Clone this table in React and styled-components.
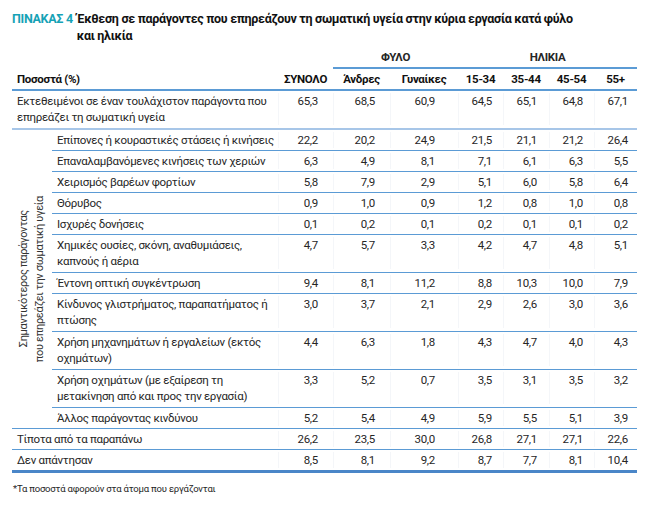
import React from "react";
import styled, { createGlobalStyle } from "styled-components";

const GlobalStyle = createGlobalStyle`
  body {
    margin: 0;
    background: #fff;
    font-family: Roboto, "Noto Sans", sans-serif;
    color: #262626;
  }
`;

// column layout: label | ΣΥΝΟΛΟ | Άνδρες | Γυναίκες | 15-34 | 35-44 | 45-54 | 55+
const NUM_COLS = "55px 57px 68px 45px 46px 45px 43px";
const PADS = [15, 15, 23, 11, 12, 11, 9];

const TOTAL = ["ΣΥΝΟΛΟ"];
const SEX = ["Άνδρες", "Γυναίκες"];
const AGE = ["15-34", "35-44", "45-54", "55+"];

const TOP = {
  label: "Εκτεθειμένοι σε έναν τουλάχιστον παράγοντα που\nεπηρεάζει τη σωματική υγεία",
  vals: ["65,3", "68,5", "60,9", "64,5", "65,1", "64,8", "67,1"]
};

const FACTORS = [
  { label: "Επίπονες ή κουραστικές στάσεις ή κινήσεις", vals: ["22,2", "20,2", "24,9", "21,5", "21,1", "21,2", "26,4"] },
  { label: "Επαναλαμβανόμενες κινήσεις των χεριών", vals: ["6,3", "4,9", "8,1", "7,1", "6,1", "6,3", "5,5"] },
  { label: "Χειρισμός βαρέων φορτίων", vals: ["5,8", "7,9", "2,9", "5,1", "6,0", "5,8", "6,4"] },
  { label: "Θόρυβος", vals: ["0,9", "1,0", "0,9", "1,2", "0,8", "1,0", "0,8"] },
  { label: "Ισχυρές δονήσεις", vals: ["0,1", "0,2", "0,1", "0,2", "0,1", "0,1", "0,2"] },
  { label: "Χημικές ουσίες, σκόνη, αναθυμιάσεις,\nκαπνούς ή αέρια", vals: ["4,7", "5,7", "3,3", "4,2", "4,7", "4,8", "5,1"] },
  { label: "Έντονη οπτική συγκέντρωση", vals: ["9,4", "8,1", "11,2", "8,8", "10,3", "10,0", "7,9"] },
  { label: "Κίνδυνος γλιστρήματος, παραπατήματος ή\nπτώσης", vals: ["3,0", "3,7", "2,1", "2,9", "2,6", "3,0", "3,6"] },
  { label: "Χρήση μηχανημάτων ή εργαλείων (εκτός\nοχημάτων)", vals: ["4,4", "6,3", "1,8", "4,3", "4,7", "4,0", "4,3"] },
  { label: "Χρήση οχημάτων (με εξαίρεση τη\nμετακίνηση από και προς την εργασία)", vals: ["3,3", "5,2", "0,7", "3,5", "3,1", "3,5", "3,2"] },
  { label: "Άλλος παράγοντας κινδύνου", vals: ["5,2", "5,4", "4,9", "5,9", "5,5", "5,1", "3,9"] }
];

const BOTTOM = [
  { label: "Τίποτα από τα παραπάνω", vals: ["26,2", "23,5", "30,0", "26,8", "27,1", "27,1", "22,6"] },
  { label: "Δεν απάντησαν", vals: ["8,5", "8,1", "9,2", "8,7", "7,7", "8,1", "10,4"] }
];

function App() {
  return (
    <Page>
      <GlobalStyle />
      <Title>
        <TitleTag>ΠΙΝΑΚΑΣ 4</TitleTag>
        <TitleText>
          Έκθεση σε παράγοντες που επηρεάζουν τη σωματική υγεία στην κύρια εργασία κατά φύλο
          <br />
          και ηλικία
        </TitleText>
      </Title>

      <Table>
        <GroupHead>
          <span />
          <span />
          <GroupName>ΦΥΛΟ</GroupName>
          <GroupName>ΗΛΙΚΙΑ</GroupName>
        </GroupHead>
        <HeadRow>
          <HeadLabel>Ποσοστά (%)</HeadLabel>
          {[...TOTAL, ...SEX, ...AGE].map(h => (
            <HeadCell key={h}>{h}</HeadCell>
          ))}
        </HeadRow>

        <Row $light>
          <Label>{TOP.label}</Label>
          {TOP.vals.map((v, i) => (
            <Num key={i} $pad={PADS[i]}>{v}</Num>
          ))}
        </Row>

        <Group>
          <GroupLabel>
            <span>
              Σημαντικότερος παράγοντας
              <br />
              που επηρεάζει την σωματική υγεία
            </span>
          </GroupLabel>
          <SubRows>
            {FACTORS.map((r, idx) => (
              <SubRow
                key={r.label}
                $tall={r.label.includes("\n")}
                $last={idx === FACTORS.length - 1}
              >
                <Label>{r.label}</Label>
                {r.vals.map((v, i) => (
                  <Num key={i} $pad={PADS[i]}>{v}</Num>
                ))}
              </SubRow>
            ))}
          </SubRows>
        </Group>

        {BOTTOM.map((r, idx) => (
          <Row key={r.label} $thick={idx === BOTTOM.length - 1}>
            <Label>{r.label}</Label>
            {r.vals.map((v, i) => (
              <Num key={i} $pad={PADS[i]}>{v}</Num>
            ))}
          </Row>
        ))}
      </Table>

      <Note>*Τα ποσοστά αφορούν στα άτομα που εργάζονται</Note>
    </Page>
  );
}

const Page = styled.div`
  width: 670px;
  padding: 10px 0 0 12px;
  box-sizing: border-box;
`;

const Title = styled.div`
  display: flex;
  align-items: flex-start;
  font-size: 12.5px;
  font-weight: 700;
  line-height: 17px;
  letter-spacing: -0.3px;
`;

const TitleTag = styled.div`
  color: #16a2b6;
  white-space: nowrap;
  margin-right: 4px;
`;

const TitleText = styled.div`
  color: #111;
`;

const Table = styled.div`
  width: 625px;
  margin-top: 4px;
  display: flex;
  flex-direction: column;
  font-size: 11.5px;
  line-height: 16px;
  letter-spacing: -0.3px;
`;

const GroupHead = styled.div`
  display: grid;
  grid-template-columns: 266px 55px 125px 179px;
  height: 21px;
  font-weight: 700;
`;

const GroupName = styled.div`
  text-align: center;
  border-bottom: 2px solid #5b9bd5;
  line-height: 19px;
`;

const HeadRow = styled.div`
  display: grid;
  grid-template-columns: 266px ${NUM_COLS};
  border-bottom: 2px solid #5b9bd5;
  height: 20px;
  align-items: center;
  font-weight: 700;
  color: #111;
`;

const HeadLabel = styled.div`
  padding-left: 5px;
`;

const HeadCell = styled.div`
  text-align: center;
  white-space: nowrap;
`;

const Row = styled.div`
  display: grid;
  grid-template-columns: 266px ${NUM_COLS};
  padding: 2px 0 ${p => (p.$light ? 3 : 2)}px;
  border-bottom: ${p =>
    p.$thick ? "3px solid #4a86c8" : p.$light ? "2px solid #a7c6e8" : "1px solid #5b9bd5"};
`;

const Label = styled.div`
  padding-left: 5px;
  white-space: pre;
`;

const Num = styled.div`
  text-align: right;
  padding-right: ${p => p.$pad}px;
  border-left: 1px solid #f4f6f9;
`;

const Group = styled.div`
  display: flex;
  border-bottom: 1px solid #5b9bd5;
`;

const GroupLabel = styled.div`
  width: 40px;
  flex: none;
  display: flex;
  align-items: center;
  justify-content: center;
  font-size: 11px;
  line-height: 16px;
  letter-spacing: -0.3px;
  color: #333;

  span {
    writing-mode: vertical-rl;
    transform: rotate(180deg);
    text-align: center;
    white-space: nowrap;
  }
`;

const SubRows = styled.div`
  flex: 1;
  display: flex;
  flex-direction: column;
`;

const SubRow = styled.div`
  display: grid;
  grid-template-columns: 226px ${NUM_COLS};
  padding: 2px 0 ${p => (p.$tall ? 3 : 2)}px;
  border-bottom: ${p => (p.$last ? "none" : "1px solid #5b9bd5")};
`;

const Note = styled.div`
  margin-top: 10px;
  padding-left: 1px;
  font-size: 9.5px;
  letter-spacing: -0.2px;
`;

export default App;
